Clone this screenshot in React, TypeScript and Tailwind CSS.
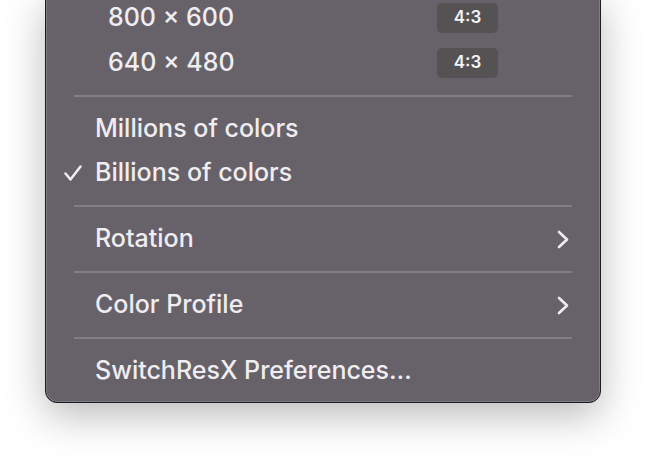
type Row =
  | { kind: "res"; label: string; ratio: string }
  | { kind: "item"; label: string; checked?: boolean; submenu?: boolean }
  | { kind: "sep" };

const rows: Row[] = [
  { kind: "res", label: "800 × 600", ratio: "4:3" },
  { kind: "res", label: "640 × 480", ratio: "4:3" },
  { kind: "sep" },
  { kind: "item", label: "Millions of colors" },
  { kind: "item", label: "Billions of colors", checked: true },
  { kind: "sep" },
  { kind: "item", label: "Rotation", submenu: true },
  { kind: "sep" },
  { kind: "item", label: "Color Profile", submenu: true },
  { kind: "sep" },
  { kind: "item", label: "SwitchResX Preferences…" },
];

function Check() {
  return (
    <svg width="18" height="16" viewBox="0 0 18 16" fill="none">
      <path
        d="M1.5 8.5 L6.5 14.5 L16.5 1.5"
        stroke="#efedf0"
        strokeWidth="2.5"
        strokeLinecap="round"
        strokeLinejoin="round"
      />
    </svg>
  );
}

function Chevron() {
  return (
    <svg width="12" height="19" viewBox="0 0 12 19" fill="none">
      <path
        d="M2 2 L10 9.5 L2 17"
        stroke="#efedf0"
        strokeWidth="2.6"
        strokeLinecap="round"
        strokeLinejoin="round"
      />
    </svg>
  );
}

export default function App() {
  return (
    <div
      className="h-screen w-full overflow-hidden bg-white"
      style={{ fontFamily: "Inter, 'Noto Sans', sans-serif" }}
    >
      <div className="ml-[45px] -mt-[6px] w-[556px] rounded-b-[12px] border border-[#1e1c1f] bg-[#67626a] pb-[9px] shadow-[inset_0_0_0_1px_rgba(255,255,255,0.16),0_12px_40px_rgba(0,0,0,0.28)] text-[25px] font-medium text-[#efedf0]">
        {rows.map((row, i) => {
          if (row.kind === "sep") {
            return (
              <div key={i} className="flex h-[22px] items-center px-[28px]">
                <div className="h-[2px] w-full bg-[#837d86]" />
              </div>
            );
          }
          if (row.kind === "res") {
            return (
              <div key={i} className="flex h-[45px] items-center pl-[62px] pr-[102px]">
                <span className="flex-1">{row.label}</span>
                <span className="flex h-[30px] w-[61px] items-center justify-center rounded-[5px] bg-[#545253] text-[17px] font-semibold text-[#f4f3f4]">
                  {row.ratio}
                </span>
              </div>
            );
          }
          return (
            <div key={i} className="flex h-[44px] items-center pr-[31px]">
              <span className="flex w-[49px] justify-end pr-[13px]">
                {row.checked && <Check />}
              </span>
              <span className="flex-1">{row.label}</span>
              {row.submenu && <Chevron />}
            </div>
          );
        })}
      </div>
    </div>
  );
}
